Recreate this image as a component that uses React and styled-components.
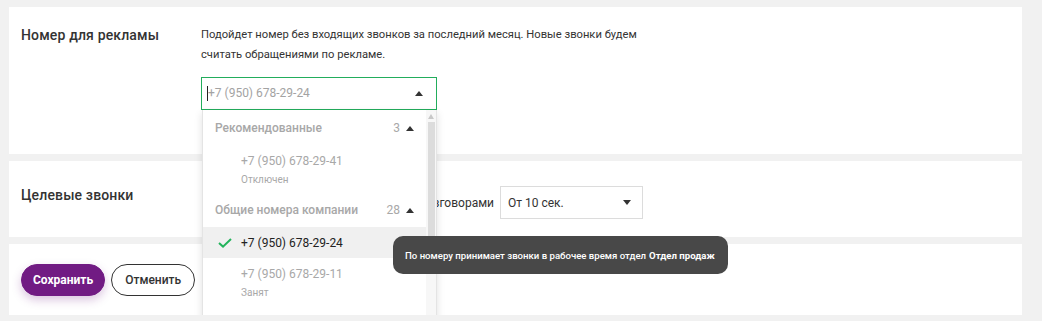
import React from "react"
import styled, { createGlobalStyle } from "styled-components"

const GlobalStyle = createGlobalStyle`
  html, body {
    margin: 0;
    padding: 0;
    overflow: hidden;
  }
  body {
    background: #f1f1f1;
    font-family: Roboto, "Noto Sans", "Liberation Sans", sans-serif;
    color: #333;
  }
`

const Page = styled("div")`
  display: flex;
  flex-direction: column;
  gap: 7px;
  width: 1013px;
  padding: 7px 0 0 9px;
`

const Card = styled("section")`
  display: flex;
  align-items: flex-start;
  background: #fff;
  padding: ${p => p.pad || "18px 12px"};
`

const Label = styled("h3")`
  flex: 0 0 180px;
  margin: 0;
  font-size: 14px;
  font-weight: 500;
  letter-spacing: 0.15px;
  line-height: ${p => p.lh || "20px"};
  color: #333;
`

const Body = styled("div")`
  display: flex;
  flex-direction: column;
`

const Hint = styled("p")`
  width: 450px;
  margin: 0;
  font-size: 11.2px;
  line-height: 20px;
  color: #333;
`

const Caret = styled("span")`
  display: inline-block;
  width: 0;
  height: 0;
  border-left: ${p => p.size || 4}px solid transparent;
  border-right: ${p => p.size || 4}px solid transparent;
  ${p =>
    p.down
      ? `border-top: 5px solid ${p.color || "#333"};`
      : `border-bottom: 5px solid ${p.color || "#333"};`}
`

const Combo = styled("div")`
  position: relative;
  margin-top: 12px;
  width: 236px;
`

const ComboInput = styled("div")`
  box-sizing: border-box;
  display: flex;
  align-items: center;
  justify-content: space-between;
  height: 33px;
  padding: 0 13px 0 5px;
  border: 1px solid #22ad5c;
  font-size: 12px;
  color: #a3a3a3;
`

const Placeholder = styled("span")`
  border-left: 1px solid #222;
  line-height: 15px;
`

const Panel = styled("div")`
  position: absolute;
  top: 33px;
  left: 1px;
  box-sizing: border-box;
  display: flex;
  width: 235px;
  height: 240px;
  background: #fff;
  border: 1px solid #e4e4e4;
  border-top: none;
  box-shadow: 0 3px 8px rgba(0, 0, 0, 0.12);
  z-index: 5;
`

const List = styled("ul")`
  flex: 1;
  margin: 0;
  padding: 1px 0 0;
  list-style: none;
`

const GroupHead = styled("li")`
  display: flex;
  align-items: center;
  justify-content: space-between;
  height: 34px;
  padding: 0 12px;
  font-size: 12px;
  font-weight: 500;
  color: #a8a8a8;
`

const Count = styled("span")`
  display: flex;
  align-items: center;
  gap: 6px;
  font-weight: 400;
`

const Option = styled("li")`
  position: relative;
  padding: 8px 0 ${p => (p.active ? "7px" : "6px")} 38px;
  background: ${p => (p.active ? "#f0f0f0" : "transparent")};
`

const Phone = styled("div")`
  font-size: 12px;
  line-height: 16px;
  color: ${p => (p.active ? "#222" : "#a8a8a8")};
`

const Status = styled("div")`
  margin-top: 4px;
  font-size: 10px;
  line-height: 14px;
  color: #a8a8a8;
`

const Check = styled("svg")`
  position: absolute;
  left: 15px;
  top: 11px;
`

const Scrollbar = styled("div")`
  display: flex;
  flex-direction: column;
  align-items: center;
  flex: 0 0 10px;
  padding-top: 4px;
  background: #f7f7f7;
`

const Thumb = styled("div")`
  width: 7px;
  height: 120px;
  margin-top: 3px;
  background: #dcdcdc;
`

const Tooltip = styled("div")`
  position: absolute;
  left: 190px;
  top: 9px;
  padding: 0 13px 0 12px;
  height: 38px;
  display: flex;
  align-items: center;
  white-space: nowrap;
  background: #484848;
  border-radius: 10px;
  color: #fff;
  font-size: 9.6px;
  font-weight: 500;
  z-index: 6;

  b {
    font-weight: 700;
    margin-left: 3px;
  }
`

const ControlRow = styled("div")`
  display: flex;
  align-items: center;
  gap: 6px;
  font-size: 12px;
  color: #333;
`

const ControlText = styled("span")`
  width: 293px;
  text-align: right;
  white-space: nowrap;
`

const Select = styled("div")`
  box-sizing: border-box;
  display: flex;
  align-items: center;
  justify-content: space-between;
  width: 143px;
  height: 33px;
  padding: 0 11px 0 7px;
  border: 1px solid #dcdcdc;
  font-size: 12px;
  color: #333;
`

const Actions = styled("div")`
  display: flex;
  gap: 6px;
`

const Button = styled("button")`
  box-sizing: border-box;
  height: 32px;
  padding: 0 ${p => (p.primary ? "11px" : "13px")};
  border-radius: 16px;
  font-family: inherit;
  font-size: 12px;
  font-weight: ${p => (p.primary ? 700 : 500)};
  color: ${p => (p.primary ? "#fff" : "#333")};
  background: ${p => (p.primary ? "#711b83" : "#fff")};
  border: 1px solid ${p => (p.primary ? "#711b83" : "#333")};
  box-shadow: ${p => (p.primary ? "0 4px 10px rgba(113, 27, 131, 0.25)" : "none")};
`

const groups = [
  {
    title: "Рекомендованные",
    count: 3,
    items: [{ phone: "+7 (950) 678-29-41", status: "Отключен" }],
  },
  {
    title: "Общие номера компании",
    count: 28,
    items: [
      { phone: "+7 (950) 678-29-24", active: true },
      { phone: "+7 (950) 678-29-11", status: "Занят" },
      { phone: "+7 (950) 678-29-10", status: "Свободен" },
    ],
  },
]

const App = () => {
  return (
    <>
      <GlobalStyle />
      <Page>
        <Card pad="18px 12px 44px">
          <Label>Номер для рекламы</Label>
          <Body>
            <Hint>
              Подойдет номер без входящих звонков за последний месяц. Новые звонки будем
              считать обращениями по рекламе.
            </Hint>
            <Combo>
              <ComboInput>
                <Placeholder>+7 (950) 678-29-24</Placeholder>
                <Caret />
              </ComboInput>
              <Panel>
                <List>
                  {groups.map(group => (
                    <React.Fragment key={group.title}>
                      <GroupHead>
                        {group.title}
                        <Count>
                          {group.count}
                          <Caret />
                        </Count>
                      </GroupHead>
                      {group.items.map(item => (
                        <Option key={item.phone} active={item.active}>
                          {item.active && (
                            <Check width="14" height="10" viewBox="0 0 14 10">
                              <path d="M1 5 L5 8.6 L13 1" fill="none" stroke="#22b35b" strokeWidth="2" />
                            </Check>
                          )}
                          <Phone active={item.active}>{item.phone}</Phone>
                          {item.status && <Status>{item.status}</Status>}
                          {item.active && (
                            <Tooltip>
                              По номеру принимает звонки в рабочее время отдел <b>Отдел продаж</b>
                            </Tooltip>
                          )}
                        </Option>
                      ))}
                    </React.Fragment>
                  ))}
                </List>
                <Scrollbar>
                  <Caret size={3} color="#c8c8c8" />
                  <Thumb />
                </Scrollbar>
              </Panel>
            </Combo>
          </Body>
        </Card>
        <Card pad="25px 12px 18px">
          <Label lh="18px">Целевые звонки</Label>
          <ControlRow>
            <ControlText>Считать целевыми звонки с разговорами</ControlText>
            <Select>
              От 10 сек.
              <Caret down />
            </Select>
          </ControlRow>
        </Card>
        <Card pad="20px 12px 19px">
          <Actions>
            <Button primary>Сохранить</Button>
            <Button>Отменить</Button>
          </Actions>
        </Card>
      </Page>
    </>
  )
}

export default App
